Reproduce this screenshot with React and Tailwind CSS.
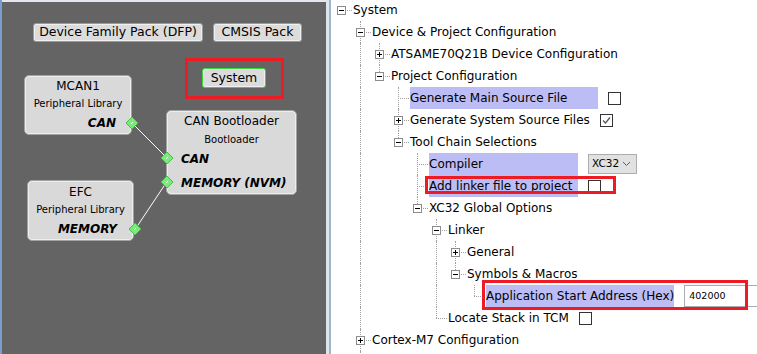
import React from "react";

const FONT = { fontFamily: '"DejaVu Sans", Verdana, sans-serif' };

// tree rows, level + how the row ends
const ROWS = [
    { lv: 0, label: "System", exp: "minus", last: true },
    { lv: 1, label: "Device & Project Configuration", exp: "minus" },
    { lv: 2, label: "ATSAME70Q21B Device Configuration", exp: "plus" },
    { lv: 2, label: "Project Configuration", exp: "minus", last: true },
    { lv: 3, label: "Generate Main Source File", hl: 188, ctrl: "box" },
    { lv: 3, label: "Generate System Source Files", exp: "plus", ctrl: "checked" },
    { lv: 3, label: "Tool Chain Selections", exp: "minus", last: true },
    { lv: 4, label: "Compiler", hl: 149, ctrl: "combo" },
    { lv: 4, label: "Add linker file to project", hl: 149, ctrl: "box" },
    { lv: 4, label: "XC32 Global Options", exp: "minus", last: true },
    { lv: 5, label: "Linker", exp: "minus" },
    { lv: 6, label: "General", exp: "plus" },
    { lv: 6, label: "Symbols & Macros", exp: "minus", last: true },
    { lv: 7, label: "Application Start Address (Hex)", hl: 196, ctrl: "field", last: true },
    { lv: 5, label: "Locate Stack in TCM", ctrl: "box", last: true },
    { lv: 1, label: "Cortex-M7 Configuration", exp: "plus" },
];

// which ancestor lines stay open on each row
function withGuides(rows) {
    const open = {};
    return rows.map((r) => {
        const guides = [];
        for (let k = 1; k < r.lv; k++) if (open[k]) guides.push(k);
        open[r.lv] = !r.last;
        return { ...r, guides };
    });
}

function Expander({ kind }) {
    return (
        <span className="absolute top-[7px] flex h-[9px] w-[9px] items-center justify-center border border-[#8c8c8c] bg-white">
            <span className="absolute h-px w-[5px] bg-black" />
            {kind === "plus" && <span className="absolute h-[5px] w-px bg-black" />}
        </span>
    );
}

function Control({ type }) {
    if (type === "box" || type === "checked") {
        return (
            <span className="ml-[10px] flex h-[13px] w-[13px] shrink-0 items-center justify-center border border-[#333] bg-white">
                {type === "checked" && (
                    <svg width="11" height="11" viewBox="0 0 11 11">
                        <polyline points="2,5.5 4.5,8 9,2.5" fill="none" stroke="#555" strokeWidth="1.3" />
                    </svg>
                )}
            </span>
        );
    }
    if (type === "combo") {
        return (
            <span className="ml-[10px] flex h-[20px] w-[49px] shrink-0 items-center justify-between border border-[#adadad] bg-[#e1e1e1] pl-[3px] pr-[5px] text-[10.5px] text-black">
                XC32
                <svg width="9" height="6" viewBox="0 0 9 6">
                    <polyline points="1,1 4.5,4.5 8,1" fill="none" stroke="#606060" strokeWidth="1" />
                </svg>
            </span>
        );
    }
    return (
        <span className="ml-[10px] flex h-[22px] w-[80px] shrink-0 items-center border border-[#abadb3] bg-white pl-[4px] text-[9.5px] text-black">
            402000
        </span>
    );
}

function TreeRow({ row }) {
    const lineX = 10 + 19 * row.lv;
    const textX = 22 + 19 * row.lv;
    return (
        <div className="relative flex h-[22px] items-center" style={{ paddingLeft: textX }}>
            {row.guides.map((k) => (
                <span key={k} className="absolute top-0 h-[22px] border-l border-dotted border-[#a0a0a0]" style={{ left: 10 + 19 * k }} />
            ))}
            {row.lv > 0 && (
                <span
                    className={`absolute top-0 border-l border-dotted border-[#a0a0a0] ${row.last ? "h-[11px]" : "h-[22px]"}`}
                    style={{ left: lineX }}
                />
            )}
            <span className="absolute top-[11px] border-t border-dotted border-[#a0a0a0]" style={{ left: lineX, width: textX - lineX - 1 }} />
            {row.exp && (
                <span className="absolute top-0" style={{ left: lineX - 4 }}>
                    <Expander kind={row.exp} />
                </span>
            )}
            <span
                className={`whitespace-nowrap leading-[22px] text-black ${row.hl ? "bg-[#bdbdf6]" : ""}`}
                style={row.hl ? { width: row.hl } : undefined}
            >
                {row.label}
            </span>
            {row.ctrl && <Control type={row.ctrl} />}
        </div>
    );
}

function NodeBox({ className, children }) {
    return (
        <div className={`absolute flex flex-col rounded-[5px] border border-[#a2a2a2] bg-[#d9d9d9] text-black shadow-[inset_0_0_0_1px_#ededed] ${className}`}>
            {children}
        </div>
    );
}

function Diamond({ x, y }) {
    return (
        <g>
            <polygon points={`${x},${y - 6} ${x + 6},${y} ${x},${y + 6} ${x - 6},${y}`} fill="#7de87d" stroke="#45c045" strokeWidth="1" />
            <line x1={x - 1} y1={y + 1} x2={x + 1} y2={y - 1} stroke="#fff" strokeWidth="1" />
        </g>
    );
}

export default function App() {
    const rows = withGuides(ROWS);
    return (
        <div className="flex h-[354px] w-[757px] overflow-hidden bg-white text-[12px]" style={FONT}>
            {/* Left: project graph */}
            <div className="flex w-[331px] shrink-0 border-l-2 border-[#7b9ecb]">
                <div className="relative flex-1 border-t-2 border-[#e3e8ee] bg-[#646464]">
                    <div className="absolute left-[31px] top-[21px] flex h-[19px] w-[170px] items-center justify-center rounded-[3px] border border-[#9a9a9a] bg-[#dcdcdc] text-[12.5px] shadow-[inset_0_0_0_1px_#f0f0f0]">
                        Device Family Pack (DFP)
                    </div>
                    <div className="absolute left-[211px] top-[21px] flex h-[19px] w-[89px] items-center justify-center rounded-[3px] border border-[#9a9a9a] bg-[#dcdcdc] text-[12.5px] shadow-[inset_0_0_0_1px_#f0f0f0]">
                        CMSIS Pack
                    </div>
                    <div className="absolute left-[200px] top-[66px] flex h-[20px] w-[64px] items-center justify-center rounded-[3px] border border-[#39d839] bg-[#dcdcdc] text-[12.5px] shadow-[inset_0_0_0_1px_#f0f0f0]">
                        System
                    </div>
                    <div className="absolute left-[183px] top-[56px] h-[41px] w-[99px] border-[3px] border-[#ed1c24]" />

                    <NodeBox className="left-[22px] top-[73px] h-[60px] w-[108px] items-center pt-px">
                        <span className="leading-[18px]">MCAN1</span>
                        <span className="text-[10px] leading-[18px]">Peripheral Library</span>
                        <span className="self-end pr-[15px] font-bold italic leading-[20px]">CAN</span>
                    </NodeBox>

                    <NodeBox className="left-[164px] top-[108px] h-[85px] w-[131px] items-center pt-px">
                        <span className="leading-[18px]">CAN Bootloader</span>
                        <span className="text-[10px] leading-[20px]">Bootloader</span>
                        <span className="self-start pl-[14px] font-bold italic leading-[18px]">CAN</span>
                        <span className="mt-[3px] self-start pl-[14px] font-bold italic leading-[24px]">MEMORY (NVM)</span>
                    </NodeBox>

                    <NodeBox className="left-[25px] top-[178px] h-[61px] w-[107px] items-center pt-[2px]">
                        <span className="leading-[18px]">EFC</span>
                        <span className="text-[10px] leading-[18px]">Peripheral Library</span>
                        <span className="self-end pr-[16px] font-bold italic leading-[20px]">MEMORY</span>
                    </NodeBox>

                    {/* connections */}
                    <svg className="pointer-events-none absolute left-0 top-0" width="324" height="352">
                        <line x1="131" y1="122" x2="164" y2="155" stroke="#fff" strokeWidth="1" />
                        <line x1="134" y1="226" x2="164" y2="181" stroke="#fff" strokeWidth="1" />
                        <Diamond x={130} y={121} />
                        <Diamond x={165} y={156} />
                        <Diamond x={165} y={180} />
                        <Diamond x={133} y={227} />
                    </svg>
                </div>
                <div className="w-[3px] bg-[#dde4ec]" />
                <div className="w-[2px] bg-[#a3b4c9]" />
            </div>

            {/* Right: configuration tree */}
            <div className="relative flex-1 overflow-hidden">
                <div className="mt-[-1px] flex flex-col">
                    {rows.map((r, i) => (
                        <TreeRow key={i} row={r} />
                    ))}
                    <div className="relative h-[22px]">
                        <span className="absolute left-[29px] top-0 h-[22px] border-l border-dotted border-[#a0a0a0]" />
                    </div>
                </div>
                <div className="absolute left-[94px] top-[176px] h-[18px] w-[191px] border-[3px] border-[#ed1c24]" />
                <div className="absolute left-[151px] top-[280px] h-[30px] w-[266px] border-[3px] border-[#ed1c24]" />
            </div>
        </div>
    );
}
